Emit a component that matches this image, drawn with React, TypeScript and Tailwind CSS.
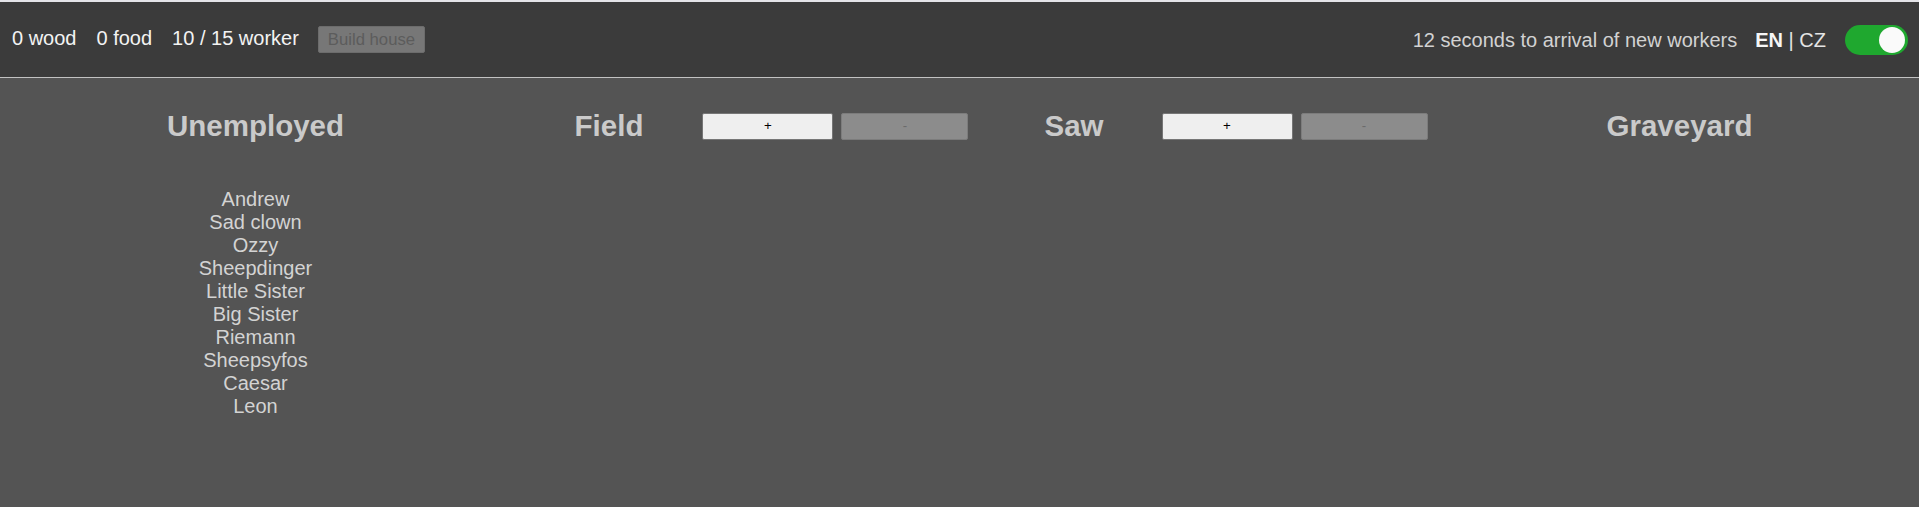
const UNEMPLOYED = [
  'Andrew',
  'Sad clown',
  'Ozzy',
  'Sheepdinger',
  'Little Sister',
  'Big Sister',
  'Riemann',
  'Sheepsyfos',
  'Caesar',
  'Leon',
];

function Heading({ children }: { children: React.ReactNode }) {
  return <h2 className="text-[29.5px] leading-[34px] font-bold text-[#cacaca]">{children}</h2>;
}

function JobControls() {
  return (
    <div className="flex items-center gap-[8px]">
      <button className="w-[131px] h-[27px] rounded-[2px] border border-[#767676] bg-[#efefef] text-[13.33px] text-black">
        +
      </button>
      <button disabled className="w-[127px] h-[27px] rounded-[2px] border border-[#7c7c7c] bg-[#8c8c8c] text-[13.33px] text-[#6b6b6b]">
        -
      </button>
    </div>
  );
}

export default function App() {
  return (
    <div className="min-h-screen bg-[#545454] font-['Liberation_Sans',Arial,sans-serif]">
      <div className="h-[2px] bg-[#e4e4e8]" />

      {/* Top bar */}
      <header className="h-[76px] bg-[#3b3b3b] border-b border-[#c2c2c2] flex items-center justify-between pl-[12px] pr-[11px]">
        <div className="flex items-center gap-[20px] text-[20px] text-[#f3f3f3] -mt-[4px]">
          <span>0 wood</span>
          <span>0 food</span>
          <span>10 / 15 worker</span>
          <button disabled className="-ml-[1px] mt-[4px] h-[27px] px-[9px] rounded-[2px] border border-[#6c6c6c] bg-[#777777] text-[16.7px] text-[#5c5c5c]">
            Build house
          </button>
        </div>

        <div className="flex items-center text-[20px]">
          <span className="text-[#d2d2d2]">12 seconds to arrival of new workers</span>
          <span className="ml-[18px] text-[#e4e4e4]">
            <b className="text-[#f6f6f6]">EN</b> | CZ
          </span>
          <div className="ml-[19px] w-[63px] h-[30px] rounded-full bg-[#1fa82f] flex items-center justify-end pr-[3px]">
            <div className="w-[26px] h-[26px] rounded-full bg-[#fafafa]" />
          </div>
        </div>
      </header>

      {/* Work areas */}
      <main className="grid grid-cols-[511px_521px_408px_1fr] pt-[31px]">
        <div className="flex flex-col items-center">
          <Heading>Unemployed</Heading>
          <ul className="mt-[45px] text-center text-[20px] leading-[normal] text-[#d3d3d3]">
            {UNEMPLOYED.map((name) => (
              <li key={name}>{name}</li>
            ))}
          </ul>
        </div>

        <div className="flex justify-center items-start">
          <div className="flex items-center gap-[59px]">
            <Heading>Field</Heading>
            <JobControls />
          </div>
        </div>

        <div className="flex justify-center items-start">
          <div className="flex items-center gap-[58px]">
            <Heading>Saw</Heading>
            <JobControls />
          </div>
        </div>

        <div className="flex flex-col items-center">
          <Heading>Graveyard</Heading>
        </div>
      </main>
    </div>
  );
}
